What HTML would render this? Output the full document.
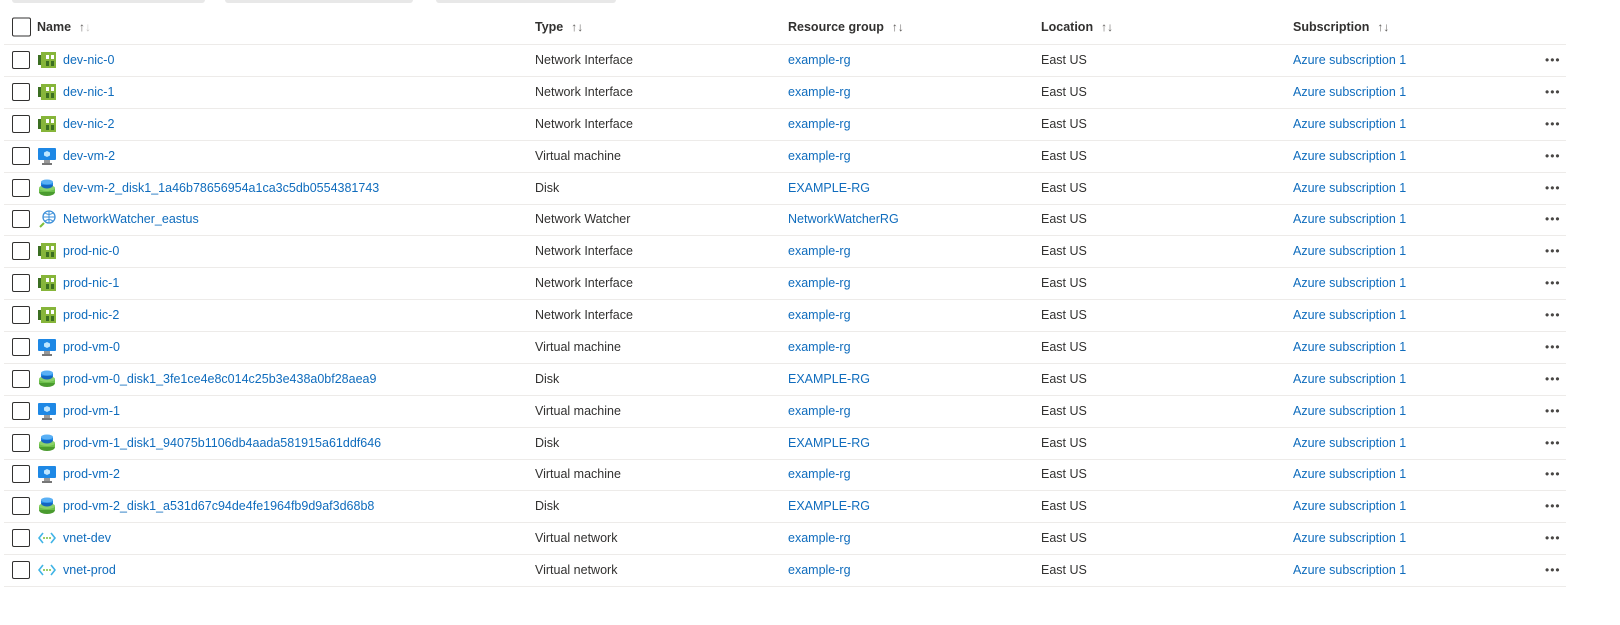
<!DOCTYPE html>
<html><head><style>
body{margin:0;background:#fff;font-family:"Liberation Sans",sans-serif;font-size:12.5px;color:#323130;width:1620px;height:625px;overflow:hidden;position:relative}
.bar{position:absolute;top:0;height:3px;background:#e8e8e8;border-radius:0 0 3px 3px}
.row{position:absolute;left:4px;width:1562px;height:32px;border-bottom:1px solid #edebe9}
.row>*{position:absolute;top:50%;transform:translateY(-50%);white-space:nowrap}
.cb{left:8px;width:16px;height:16px;border:1px solid #323130;border-radius:2px}
.ic{left:34px;width:18px;height:18px}
.a{color:#0f6cbd}
.n{left:59px}.t{left:531px}.g{left:784px}.l{left:1037px}.s{left:1289px}
.d{left:1541px;font-size:12px;letter-spacing:1px;color:#484644}
.h{font-weight:bold}
.ar{color:#605e5c;font-weight:normal;margin-left:8px;font-size:12px}
</style></head><body>
<div class="bar" style="left:12px;width:193px"></div>
<div class="bar" style="left:225px;width:188px"></div>
<div class="bar" style="left:436px;width:180px"></div>
<div class="row" style="top:10px;height:34px">
<div class="cb" style="width:17px;height:17px"></div>
<div class="n h" style="left:33px">Name<span class="ar">↑<span style="color:#c8c6c4">↓</span></span></div>
<div class="t h">Type<span class="ar">↑↓</span></div>
<div class="g h">Resource group<span class="ar">↑↓</span></div>
<div class="l h">Location<span class="ar">↑↓</span></div>
<div class="s h">Subscription<span class="ar">↑↓</span></div>
</div>
<div id="rows"></div>
<script>
var nic='<svg class="ic" viewBox="0 0 18 18"><rect x="0" y="4" width="3" height="10" fill="#3b6e22"/><rect x="3" y="1" width="15" height="16" fill="#86b53a"/><rect x="8" y="4" width="3" height="4" fill="#fff"/><rect x="13" y="4" width="3" height="4" fill="#fff"/><rect x="8" y="10" width="3" height="5" fill="#3b6e22"/><rect x="13" y="10" width="3" height="5" fill="#3b6e22"/></svg>';
var vm='<svg class="ic" viewBox="0 0 18 18"><rect x="0" y="1" width="18" height="12" rx="1" fill="#1e88e5"/><rect x="6" y="13" width="6" height="3" fill="#999"/><rect x="4" y="16" width="10" height="2" fill="#777"/><path d="M9 4l3 1.5v3L9 10 6 8.5v-3z" fill="#bfe6ff"/></svg>';
var disk='<svg class="ic" viewBox="0 0 18 18"><ellipse cx="9" cy="13" rx="8" ry="4" fill="#4a9b2f"/><rect x="1" y="9" width="16" height="4" fill="#6cc04a"/><ellipse cx="9" cy="9" rx="8" ry="3" fill="#8bd16a"/><ellipse cx="9" cy="6" rx="6" ry="3.5" fill="#1565c0"/><rect x="3" y="3" width="12" height="3" fill="#1e88e5"/><ellipse cx="9" cy="3" rx="6" ry="2.5" fill="#5ab0f5"/></svg>';
var nw='<svg class="ic" viewBox="0 0 18 18"><circle cx="11" cy="7" r="6" fill="none" stroke="#3b8fd9" stroke-width="1.3"/><path d="M5 7h12M11 1v12M7 3c3 2 5 2 8 0M7 11c3-2 5-2 8 0" stroke="#3b8fd9" fill="none" stroke-width="1"/><path d="M2 17l4-4" stroke="#7dbf3c" stroke-width="2"/></svg>';
var vn='<svg class="ic" viewBox="0 0 18 18"><path d="M5 4L1 9l4 5M13 4l4 5-4 5" stroke="#40b4e6" stroke-width="1.6" fill="none"/><circle cx="6" cy="9" r="1" fill="#7dbf3c"/><circle cx="9" cy="9" r="1" fill="#7dbf3c"/><circle cx="12" cy="9" r="1" fill="#7dbf3c"/></svg>';
var d=[["dev-nic-0",nic,"Network Interface","example-rg"],["dev-nic-1",nic,"Network Interface","example-rg"],["dev-nic-2",nic,"Network Interface","example-rg"],["dev-vm-2",vm,"Virtual machine","example-rg"],["dev-vm-2_disk1_1a46b78656954a1ca3c5db0554381743",disk,"Disk","EXAMPLE-RG"],["NetworkWatcher_eastus",nw,"Network Watcher","NetworkWatcherRG"],["prod-nic-0",nic,"Network Interface","example-rg"],["prod-nic-1",nic,"Network Interface","example-rg"],["prod-nic-2",nic,"Network Interface","example-rg"],["prod-vm-0",vm,"Virtual machine","example-rg"],["prod-vm-0_disk1_3fe1ce4e8c014c25b3e438a0bf28aea9",disk,"Disk","EXAMPLE-RG"],["prod-vm-1",vm,"Virtual machine","example-rg"],["prod-vm-1_disk1_94075b1106db4aada581915a61ddf646",disk,"Disk","EXAMPLE-RG"],["prod-vm-2",vm,"Virtual machine","example-rg"],["prod-vm-2_disk1_a531d67c94de4fe1964fb9d9af3d68b8",disk,"Disk","EXAMPLE-RG"],["vnet-dev",vn,"Virtual network","example-rg"],["vnet-prod",vn,"Virtual network","example-rg"]];
var h='';d.forEach(function(r,i){var top=44+i*31.875;h+='<div class="row" style="top:'+top+'px"><div class="cb"></div>'+r[1]+'<div class="n a">'+r[0]+'</div><div class="t">'+r[2]+'</div><div class="g a">'+r[3]+'</div><div class="l">East US</div><div class="s a">Azure subscription 1</div><div class="d">•••</div></div>';});
document.getElementById('rows').innerHTML=h;
</script>
</body></html>
